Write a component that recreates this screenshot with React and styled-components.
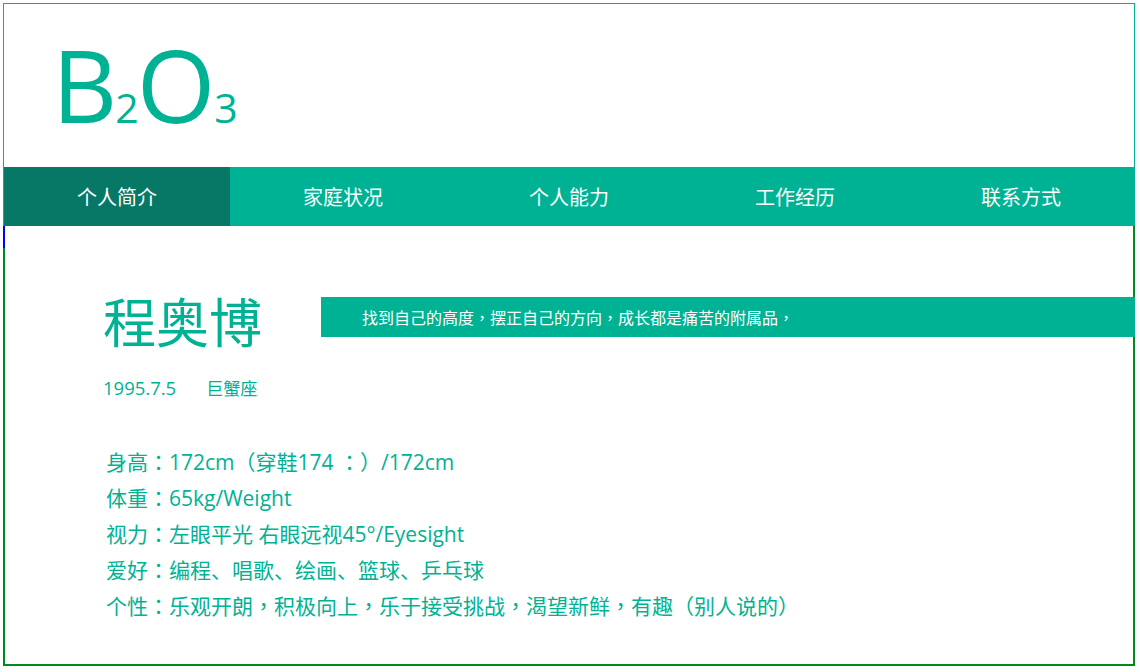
import React from "react";
import styled, { createGlobalStyle } from "styled-components";

const Global = createGlobalStyle`
  html, body { margin: 0; padding: 0; background: #fff; }
  body { font-family: "Open Sans", "Noto Sans CJK SC", sans-serif; }
`;

const TEAL = "#00b294";

const Page = styled.div`
  margin: 3px 0 0 3px;
  width: 1130px;
  border: 1px solid ${TEAL};
  border-bottom: none;
  background: #fff;
`;

const Header = styled.header`
  height: 163px;
  box-sizing: border-box;
  padding: 28px 0 0 48px;
`;

const Logo = styled.h1`
  margin: 0;
  font-family: "Open Sans", sans-serif;
  font-weight: 400;
  font-size: 101px;
  line-height: 105px;
  color: ${TEAL};
  letter-spacing: 0;
`;

const Sub = styled.span`
  font-size: 41px;
  margin-left: ${(p) => p.$ml}px;
  margin-right: ${(p) => p.$mr}px;
`;

const Nav = styled.nav`
  display: grid;
  grid-template-columns: repeat(5, 1fr);
  height: 59px;
  background: ${TEAL};
`;

const NavItem = styled.a`
  display: flex;
  align-items: center;
  justify-content: center;
  color: #fff;
  font-family: "Noto Sans CJK SC", sans-serif;
  font-size: 20px;
  text-decoration: none;
  background: ${(p) => (p.$active ? "#077866" : "transparent")};
`;

const Content = styled.section`
  height: 440px;
  box-sizing: border-box;
  border-left: 2px solid #008a1e;
  border-right: 2px solid #008a1e;
  border-bottom: 2px solid #008a1e;
  margin-left: -1px;
  margin-right: -1px;
`;

const Marker = styled.div`
  height: 22px;
  margin-left: -2px;
  border-left: 2px solid #0000ff;
`;

const Inner = styled.div`
  padding: 45px 0 0 98px;
  color: ${TEAL};
`;

const TitleRow = styled.div`
  display: flex;
  align-items: flex-start;
`;

const Name = styled.h2`
  margin: 0;
  width: 218px;
  font-family: "Noto Sans CJK SC", sans-serif;
  font-weight: 400;
  font-size: 53px;
  line-height: 54px;
  color: ${TEAL};
`;

const Motto = styled.div`
  flex: 1;
  margin-top: 4px;
  margin-right: -2px;
  height: 40px;
  display: flex;
  align-items: center;
  padding-left: 41px;
  background: ${TEAL};
  color: #fff;
  font-family: "Noto Sans CJK SC", sans-serif;
  font-size: 16px;
`;

const Meta = styled.div`
  display: flex;
  align-items: baseline;
  gap: 30px;
  margin-top: 31px;
  line-height: 20px;
`;

const MetaItem = styled.span`
  font-family: ${(p) => (p.$cjk ? '"Noto Sans CJK SC", sans-serif' : '"Open Sans", sans-serif')};
  font-size: ${(p) => (p.$cjk ? "17px" : "18.5px")};
`;

const Details = styled.ul`
  list-style: none;
  margin: 46px 0 0 0;
  padding: 0 0 0 3px;
`;

const Detail = styled.li`
  height: 36px;
  font-family: "Open Sans", "Noto Sans CJK SC", sans-serif;
  font-size: 21px;
  line-height: 36px;
  color: ${TEAL};
  white-space: nowrap;
`;

const Punct = styled.span`
  font-family: "Noto Sans CJK TC", sans-serif;
  line-height: 1;
`;

const withPunct = (text) =>
  text.split(/([：，（）])/).map((part, i) =>
    /^[：，（）]$/.test(part) ? <Punct key={i}>{part}</Punct> : part
  );

const navs = ["个人简介", "家庭状况", "个人能力", "工作经历", "联系方式"];
const details = [
  "身高：172cm（穿鞋174 ：）/172cm",
  "体重：65kg/Weight",
  "视力：左眼平光 右眼远视45°/Eyesight",
  "爱好：编程、唱歌、绘画、篮球、乒乓球",
  "个性：乐观开朗，积极向上，乐于接受挑战，渴望新鲜，有趣（别人说的）",
];

export default function App() {
  return (
    <>
      <Global />
      <Page>
        <Header>
          <Logo>
            B<Sub $ml={-2} $mr={-2}>2</Sub>O<Sub $ml={-1} $mr={0}>3</Sub>
          </Logo>
        </Header>
        <Nav>
          {navs.map((n, i) => (
            <NavItem key={n} href="#" $active={i === 0}>
              {n}
            </NavItem>
          ))}
        </Nav>
        <Content>
          <Marker />
          <Inner>
            <TitleRow>
              <Name>程奥博</Name>
              <Motto>{withPunct("找到自己的高度，摆正自己的方向，成长都是痛苦的附属品，")}</Motto>
            </TitleRow>
            <Meta>
              <MetaItem>1995.7.5</MetaItem>
              <MetaItem $cjk>巨蟹座</MetaItem>
            </Meta>
            <Details>
              {details.map((d) => (
                <Detail key={d}>{withPunct(d)}</Detail>
              ))}
            </Details>
          </Inner>
        </Content>
      </Page>
    </>
  );
}
